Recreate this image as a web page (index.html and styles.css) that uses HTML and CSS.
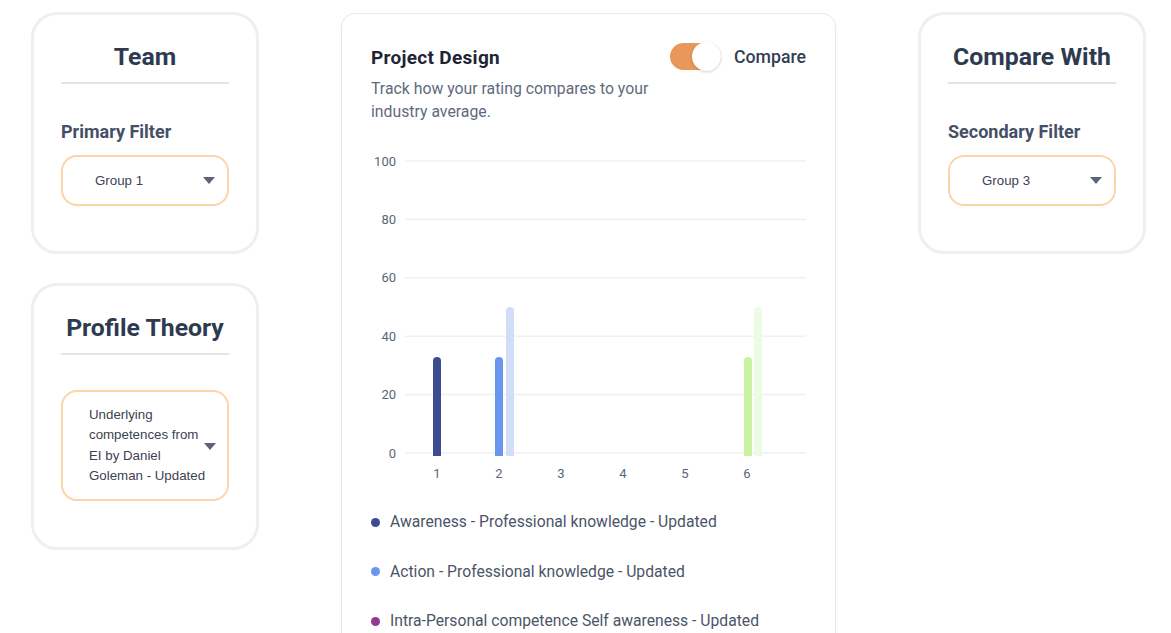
FILE: index.html
```html
<!DOCTYPE html>
<html lang="en">
<head>
<meta charset="utf-8">
<title>Project Design</title>
<link rel="stylesheet" href="styles.css">
</head>
<body>
<div class="page">
  <div class="side">
    <section class="panel">
      <h2 class="panel-title">Team</h2>
      <div class="filter-label">Primary Filter</div>
      <div class="select"><span class="select-text">Group 1</span><span class="caret"></span></div>
    </section>
    <section class="panel panel-theory">
      <h2 class="panel-title">Profile Theory</h2>
      <div class="select select-multi"><span class="select-text">Underlying competences from EI by Daniel Goleman - Updated</span><span class="caret"></span></div>
    </section>
  </div>

  <main class="chart-card">
    <header class="chart-head">
      <div class="chart-titles">
        <h1 class="chart-title">Project Design</h1>
        <p class="chart-sub">Track how your rating compares to your industry average.</p>
      </div>
      <div class="compare">
        <span class="toggle"><span class="knob"></span></span>
        <span class="compare-label">Compare</span>
      </div>
    </header>
    <svg class="chart" width="435" height="345" viewBox="0 0 435 345">
      <g class="grid">
        <line x1="34" x2="435" y1="21" y2="21"/>
        <line x1="34" x2="435" y1="79.4" y2="79.4"/>
        <line x1="34" x2="435" y1="137.8" y2="137.8"/>
        <line x1="34" x2="435" y1="196.2" y2="196.2"/>
        <line x1="34" x2="435" y1="254.6" y2="254.6"/>
        <line x1="34" x2="435" y1="313" y2="313"/>
      </g>
      <g class="ylab">
        <text x="25" y="25.5">100</text>
        <text x="25" y="83.9">80</text>
        <text x="25" y="142.3">60</text>
        <text x="25" y="200.7">40</text>
        <text x="25" y="259.1">20</text>
        <text x="25" y="317.5">0</text>
      </g>
      <path fill="#3d4b8f" d="M62 316V221a4 4 0 0 1 8 0V316Z"/>
      <path fill="#6b96f0" d="M124 316V221a4 4 0 0 1 8 0V316Z"/>
      <path fill="#d2ddf8" d="M135 316V171a4 4 0 0 1 8 0V316Z"/>
      <path fill="#c9f2a3" d="M373 316V221a4 4 0 0 1 8 0V316Z"/>
      <path fill="#edfbe2" d="M383 316V171a4 4 0 0 1 8 0V316Z"/>
      <g class="xlab">
        <text x="66" y="338">1</text>
        <text x="128" y="338">2</text>
        <text x="190" y="338">3</text>
        <text x="252" y="338">4</text>
        <text x="314" y="338">5</text>
        <text x="376" y="338">6</text>
      </g>
    </svg>
    <ul class="legend">
      <li><span class="dot dot-a"></span>Awareness - Professional knowledge - Updated</li>
      <li><span class="dot dot-b"></span>Action - Professional knowledge - Updated</li>
      <li><span class="dot dot-c"></span>Intra-Personal competence Self awareness - Updated</li>
    </ul>
  </main>

  <div class="side">
    <section class="panel">
      <h2 class="panel-title">Compare With</h2>
      <div class="filter-label">Secondary Filter</div>
      <div class="select"><span class="select-text">Group 3</span><span class="caret"></span></div>
    </section>
  </div>
</div>
</body>
</html>
```

FILE: styles.css
```css
* { box-sizing: border-box; }
html, body { margin: 0; padding: 0; background: #ffffff; }
body { font-family: Roboto, "Noto Sans", Arial, sans-serif; color: #2d3748; overflow: hidden; height: 633px; }

.page {
  display: flex;
  align-items: flex-start;
  gap: 82px;
  padding: 12px 0 0 31px;
}

.side { display: flex; flex-direction: column; gap: 29px; width: 228px; flex: none; }

.panel {
  border: 3px solid #efefef;
  border-radius: 26px;
  padding: 27px 27px 45px;
  background: #fff;
}
.panel-title {
  margin: 0;
  font-size: 24.8px;
  line-height: 30px;
  font-weight: 700;
  color: #2e3a4f;
  text-align: center;
  padding-bottom: 10px;
  border-bottom: 2px solid #e4e4e4;
}
.filter-label {
  margin-top: 37px;
  font-size: 18px;
  line-height: 22px;
  font-weight: 700;
  color: #455066;
}
.select {
  position: relative;
  margin-top: 12px;
  height: 51px;
  border: 2px solid #fcd4a8;
  border-radius: 16px;
  display: flex;
  align-items: center;
  padding: 0 12px 0 32px;
  font-family: "Liberation Sans", Arial, sans-serif;
  font-size: 13.3px;
  color: #3c4252;
}
.select-text { flex: 1; }
.caret {
  width: 0; height: 0;
  border-left: 6px solid transparent;
  border-right: 6px solid transparent;
  border-top: 7px solid #5c6478;
  flex: none;
  margin-top: -1px;
}
.panel-theory { padding-bottom: 46px; }
.panel-theory .select-multi {
  margin-top: 35px;
  height: 111px;
  padding: 0 12px 0 26px;
  line-height: 20.3px;
}
.select-multi .select-text { flex: none; width: 122px; }
.select-multi .caret { position: absolute; right: 11px; top: 51px; margin: 0; }

.chart-card {
  width: 495px;
  flex: none;
  margin-top: 1px;
  border: 1px solid #e6e8ec;
  border-radius: 14px;
  box-shadow: 0 1px 3px rgba(30, 40, 60, 0.05);
  padding: 30px 29px 40px;
  background: #fff;
}
.chart-head { display: flex; justify-content: space-between; align-items: flex-start; }
.chart-title {
  margin: 0;
  font-size: 19px;
  letter-spacing: 0.3px;
  line-height: 28px;
  font-weight: 700;
  color: #1f2533;
}
.chart-sub {
  margin: 6px 0 0;
  max-width: 300px;
  font-size: 15.8px;
  line-height: 22.5px;
  color: #5f6a7c;
}
.compare { display: flex; align-items: center; gap: 13px; margin-top: -1px; }
.toggle {
  position: relative;
  width: 51px;
  height: 27px;
  border-radius: 14px;
  background: #e8985a;
  display: block;
}
.knob {
  position: absolute;
  right: 0;
  top: -1px;
  width: 29px;
  height: 29px;
  border-radius: 50%;
  background: #fff;
  box-shadow: 0 1px 3px rgba(0, 0, 0, 0.18);
}
.compare-label { font-size: 17.7px; font-weight: 500; color: #354055; line-height: 24px; }

.chart { display: block; margin-top: 17px; }
.grid line { stroke: #f0f1f6; stroke-width: 1.6; }
.ylab text { font-family: Roboto, sans-serif; font-size: 13px; fill: #5b6578; text-anchor: end; }
.xlab text { font-family: Roboto, sans-serif; font-size: 13px; fill: #5b6578; text-anchor: middle; }

.legend { list-style: none; margin: 26px 0 0; padding: 0; display: flex; flex-direction: column; gap: 27.5px; }
.legend li { display: flex; align-items: center; font-size: 15.7px; line-height: 22px; color: #4b5568; }
.dot { width: 9px; height: 9px; border-radius: 50%; margin: 0 10px 0 0; flex: none; }
.dot-a { background: #3d4b8f; }
.dot-b { background: #6b96f0; }
.dot-c { background: #923a8f; }
```
